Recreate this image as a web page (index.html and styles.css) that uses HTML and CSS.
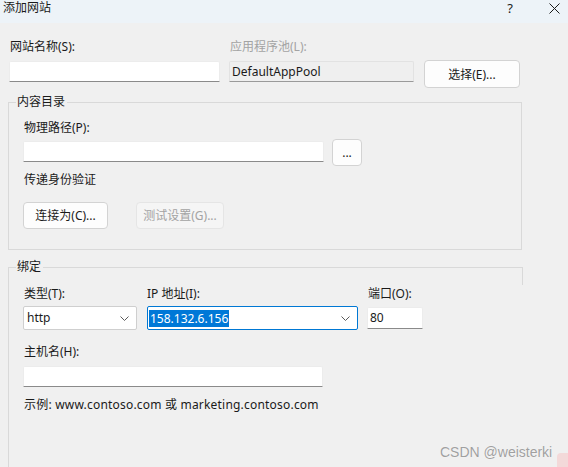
FILE: index.html
```html
<!DOCTYPE html>
<html lang="zh-CN">
<head>
<meta charset="utf-8">
<title>添加网站</title>
<link rel="stylesheet" href="styles.css">
</head>
<body>
<div class="window">
  <div class="titlebar">
    <span class="title">添加网站</span>
    <span class="help">?</span>
    <svg class="close" width="11" height="11" viewBox="0 0 11 11"><path d="M0.5 0.5 L10.5 10.5 M10.5 0.5 L0.5 10.5" stroke="#1a1a1a" stroke-width="1" fill="none"/></svg>
  </div>

  <div class="toprow">
    <div class="col col-name">
      <div class="label">网站名称(S):</div>
      <div class="input"></div>
    </div>
    <div class="col col-pool">
      <div class="label disabled">应用程序池(L):</div>
      <div class="input readonly">DefaultAppPool</div>
    </div>
    <button class="btn btn-select">选择(E)...</button>
  </div>

  <div class="group group-content">
    <span class="legend">内容目录</span>
    <div class="label">物理路径(P):</div>
    <div class="pathrow">
      <div class="input input-path"></div>
      <button class="btn btn-dots">...</button>
    </div>
    <div class="label passlabel">传递身份验证</div>
    <div class="btnrow">
      <button class="btn btn-connect">连接为(C)...</button>
      <button class="btn btn-test" disabled>测试设置(G)...</button>
    </div>
  </div>

  <div class="group group-bind">
    <span class="legend">绑定</span>
    <div class="bindrow">
      <div class="col col-type">
        <div class="label">类型(T):</div>
        <div class="select"><span>http</span><svg width="9" height="5" viewBox="0 0 9 5"><path d="M0.5 0.5 L4.5 4.5 L8.5 0.5" stroke="#5a5a5a" fill="none"/></svg></div>
      </div>
      <div class="col col-ip">
        <div class="label">IP 地址(I):</div>
        <div class="select select-ip"><span class="sel">158.132.6.156</span><svg width="9" height="5" viewBox="0 0 9 5"><path d="M0.5 0.5 L4.5 4.5 L8.5 0.5" stroke="#5a5a5a" fill="none"/></svg></div>
      </div>
      <div class="col col-port">
        <div class="label">端口(O):</div>
        <div class="input input-port">80</div>
      </div>
    </div>
    <div class="label hostlabel">主机名(H):</div>
    <div class="input input-host"></div>
    <div class="example">示例: www.contoso.com 或 marketing.contoso.com</div>
  </div>

  <div class="watermark">CSDN @weisterki</div>
  <div class="logo-peek"></div>
</div>
</body>
</html>
```

FILE: styles.css
```css
* { box-sizing: border-box; }
html, body {
  margin: 0;
  padding: 0;
  background: #f0f0f0;
}
body {
  width: 568px;
  height: 467px;
  overflow: hidden;
  font-family: "Noto Sans", "Noto Sans CJK SC", sans-serif;
  font-size: 12px;
  color: #1a1a1a;
}
.window {
  position: relative;
  width: 568px;
  height: 467px;
  overflow: hidden;
}
.titlebar {
  height: 23px;
  background: #edf3f8;
  display: flex;
  align-items: flex-start;
  padding-left: 3px;
  line-height: 16px;
}
.title { font-size: 12px; }
.help {
  margin-left: auto;
  font-size: 13px;
  line-height: 16px;
}
.close {
  margin: 3px 8px 0 36px;
}
.label {
  line-height: 16px;
  padding-left: 1px;
  white-space: nowrap;
}
.label.disabled { color: #a3a3a3; }
.input {
  background: #fff;
  border: 1px solid #ececec;
  border-bottom: 1px solid #8a8a8a;
  border-radius: 2px 2px 0 0;
  height: 21px;
  line-height: 19px;
  padding-left: 2px;
}
.input.readonly {
  background: #efefef;
  border: 1px solid #e2e2e2;
  border-bottom: 1px solid #9a9a9a;
}
.btn {
  font: inherit;
  color: #1a1a1a;
  background: #fdfdfd;
  border: 1px solid #d3d3d3;
  border-radius: 4px;
  padding: 0;
  height: 27px;
  line-height: 25px;
}
.btn:disabled {
  background: #f5f5f5;
  border-color: #e5e5e5;
  color: #a3a3a3;
}

/* top row */
.toprow {
  display: flex;
  align-items: flex-start;
  padding: 16px 0 0 9px;
}
.col-name { width: 211px; }
.col-pool { width: 185px; margin-left: 9px; }
.toprow .input { margin-top: 6px; }
.btn-select {
  width: 96px;
  height: 28px;
  margin: 21px 0 0 10px;
}

/* groups */
.group {
  position: relative;
  width: 514px;
  margin-left: 8px;
  border: 1px solid #d9d9d9;
}
.legend {
  position: absolute;
  top: -8px;
  left: 7px;
  padding: 0 2px 0 1px;
  background: #f0f0f0;
  line-height: 14px;
}
.group-content {
  margin-top: 14px;
  height: 148px;
  padding: 17px 0 0 14px;
}
.pathrow {
  display: flex;
  align-items: flex-start;
  margin-top: 3px;
}
.input-path { width: 301px; margin-top: 2px; }
.btn-dots { width: 30px; margin-left: 8px; line-height: 20px; }
.passlabel { margin-top: 6px; }
.btnrow { display: flex; margin-top: 14px; }
.btn-connect { width: 85px; }
.btn-test { width: 88px; margin-left: 28px; }

.group-bind {
  margin-top: 17px;
  height: 260px;
  border-right: none;
  border-bottom: none;
  padding: 18px 0 0 14px;
}
.group-bind::after {
  content: "";
  position: absolute;
  top: -1px;
  right: -1px;
  width: 1px;
  height: 18px;
  background: #d9d9d9;
}
.bindrow { display: flex; align-items: flex-start; }
.col-type { width: 114px; }
.col-ip { width: 211px; margin-left: 10px; }
.col-ip .label { padding-left: 0; }
.col-port { width: 56px; margin-left: 9px; }
.select {
  margin-top: 4px;
  height: 24px;
  background: #fff;
  border: 1px solid #cfcfcf;
  border-radius: 2px;
  display: flex;
  align-items: center;
  justify-content: space-between;
  padding: 0 7px 0 3px;
  line-height: 20px;
}
.select svg { margin-top: 1px; }
.select-ip {
  border-color: #0078d4;
  padding-left: 1px;
}
.sel {
  background: #0078d7;
  color: #fff;
  padding: 0 1px;
  line-height: 17px;
}
.input-port { margin-top: 5px; height: 22px; line-height: 20px; }
.hostlabel { margin-top: 14px; }
.input-host { width: 300px; margin-top: 6px; }
.example {
  margin-top: 10px;
  line-height: 16px;
  padding-left: 1px;
  letter-spacing: 0.2px;
}

/* watermark overlay */
.watermark {
  position: absolute;
  left: 440px;
  top: 444px;
  font-family: "Liberation Sans", sans-serif;
  font-size: 14px;
  line-height: 16px;
  color: #a0a0a0;
  text-shadow: 0 0 1px #fff;
}
.logo-peek {
  position: absolute;
  left: 557px;
  top: 453px;
  width: 20px;
  height: 20px;
  border-radius: 4px;
  background: #f3d9d9;
}
```
